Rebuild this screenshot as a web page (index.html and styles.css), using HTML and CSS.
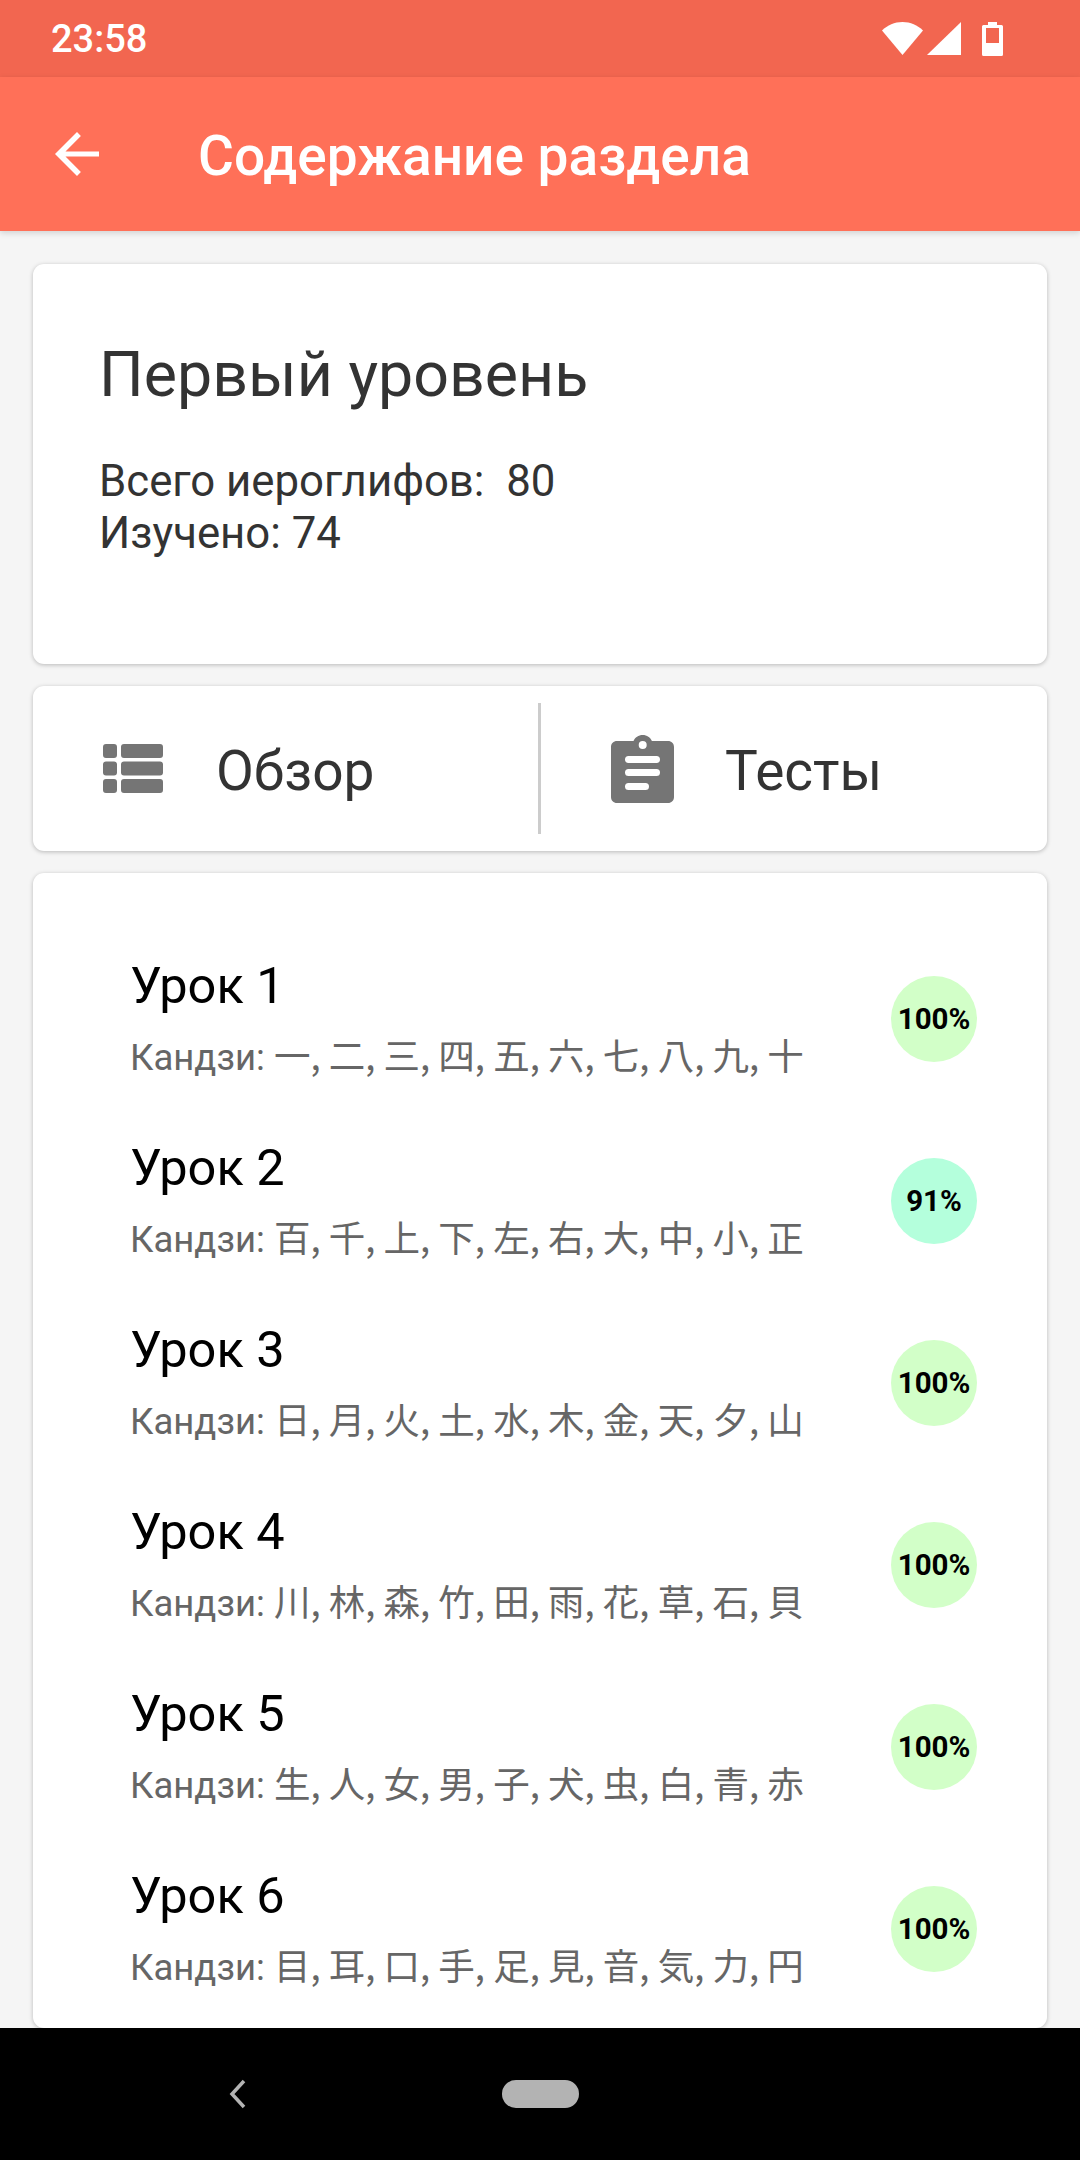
FILE: index.html
```html
<!DOCTYPE html>
<html lang="ru">
<head>
<meta charset="UTF-8">
<meta name="viewport" content="width=device-width, initial-scale=1.0">
<title>Содержание раздела</title>
<link rel="stylesheet" href="styles.css">
</head>
<body>
<div class="screen">
  <div class="status-bar">
    <span class="clock">23:58</span>
    <div class="status-icons">
      <svg class="wifi" width="41" height="33" viewBox="0 0 41 33"><path class="white" d="M0 8.500C5.500 3.200 12.500 0 20.500 0S35.500 3.200 41 8.500L20.500 33z"/></svg>
      <svg class="signal" width="34" height="33" viewBox="0 0 34 33"><path class="white" d="M34 0v33H0z"/></svg>
      <svg width="21" height="34" viewBox="0 0 21 34"><path class="white" fill-rule="evenodd" d="M6 0h9v3h4.500A1.500 1.500 0 0 1 21 4.500v28a1.500 1.500 0 0 1-1.500 1.500h-18A1.500 1.500 0 0 1 0 32.500v-28A1.500 1.500 0 0 1 1.500 3H6zM4 6v15h13V6z"/></svg>
    </div>
  </div>

  <div class="toolbar">
    <svg class="back" width="44" height="44" viewBox="0 0 44 44"><path class="white" d="M44 19.500H10.500L25.900 4 22 0 0 22l22 22 3.900-4L10.500 24.500H44z"/></svg>
    <h1>Содержание раздела</h1>
  </div>

  <div class="content">
    <div class="card summary">
      <h2>Первый уровень</h2>
      <p>Всего иероглифов:&nbsp; 80</p>
      <p>Изучено: 74</p>
    </div>

    <div class="card tabs">
      <div class="tab tab-left">
        <svg width="60" height="49" viewBox="0 0 60 49"><path class="grey" d="M3 0h8a3 3 0 0 1 3 3v8a3 3 0 0 1-3 3H3a3 3 0 0 1-3-3V3a3 3 0 0 1 3-3zM3 17.500h8a3 3 0 0 1 3 3v8a3 3 0 0 1-3 3H3a3 3 0 0 1-3-3v-8a3 3 0 0 1 3-3zM3 35h8a3 3 0 0 1 3 3v8a3 3 0 0 1-3 3H3a3 3 0 0 1-3-3v-8a3 3 0 0 1 3-3zM21 0h36a3 3 0 0 1 3 3v8a3 3 0 0 1-3 3H21a3 3 0 0 1-3-3V3a3 3 0 0 1 3-3zM21 17.500h36a3 3 0 0 1 3 3v8a3 3 0 0 1-3 3H21a3 3 0 0 1-3-3v-8a3 3 0 0 1 3-3zM21 35h36a3 3 0 0 1 3 3v8a3 3 0 0 1-3 3H21a3 3 0 0 1-3-3v-8a3 3 0 0 1 3-3z"/></svg>
        <span>Обзор</span>
      </div>
      <div class="tab-divider"></div>
      <div class="tab tab-right">
        <svg width="63" height="68" viewBox="0 0 63 68"><path class="grey" fill-rule="evenodd" d="M6 6h16.500C24 2.500 27.500 0 31.700 0s7.700 2.500 9.200 6H57c3.500 0 6 2.500 6 6v50c0 3.500-2.500 6-6 6H6c-3.500 0-6-2.500-6-6V12c0-3.500 2.500-6 6-6zM31.700 6a4 4 0 1 0 0 8 4 4 0 0 0 0-8zM17.500 21a3.500 3.500 0 0 0 0 7h28a3.500 3.500 0 0 0 0-7zM17.500 34a3.500 3.500 0 0 0 0 7h28a3.500 3.500 0 0 0 0-7zM17.500 48a3.500 3.500 0 0 0 0 7h17a3.500 3.500 0 0 0 0-7z"/></svg>
        <span>Тесты</span>
      </div>
    </div>

    <div class="card lessons">
      <div class="lesson">
        <div class="lesson-text">
          <div class="lesson-title">Урок 1</div>
          <div class="lesson-kanji">Кандзи: <span class="kanji">一, 二, 三, 四, 五, 六, 七, 八, 九, 十</span></div>
        </div>
        <div class="badge done">100%</div>
      </div>
      <div class="lesson">
        <div class="lesson-text">
          <div class="lesson-title">Урок 2</div>
          <div class="lesson-kanji">Кандзи: <span class="kanji">百, 千, 上, 下, 左, 右, 大, 中, 小, 正</span></div>
        </div>
        <div class="badge partial">91%</div>
      </div>
      <div class="lesson">
        <div class="lesson-text">
          <div class="lesson-title">Урок 3</div>
          <div class="lesson-kanji">Кандзи: <span class="kanji">日, 月, 火, 土, 水, 木, 金, 天, 夕, 山</span></div>
        </div>
        <div class="badge done">100%</div>
      </div>
      <div class="lesson">
        <div class="lesson-text">
          <div class="lesson-title">Урок 4</div>
          <div class="lesson-kanji">Кандзи: <span class="kanji">川, 林, 森, 竹, 田, 雨, 花, 草, 石, 貝</span></div>
        </div>
        <div class="badge done">100%</div>
      </div>
      <div class="lesson">
        <div class="lesson-text">
          <div class="lesson-title">Урок 5</div>
          <div class="lesson-kanji">Кандзи: <span class="kanji">生, 人, 女, 男, 子, 犬, 虫, 白, 青, 赤</span></div>
        </div>
        <div class="badge done">100%</div>
      </div>
      <div class="lesson">
        <div class="lesson-text">
          <div class="lesson-title">Урок 6</div>
          <div class="lesson-kanji">Кандзи: <span class="kanji">目, 耳, 口, 手, 足, 見, 音, 気, 力, 円</span></div>
        </div>
        <div class="badge done">100%</div>
      </div>
    </div>
  </div>

  <div class="nav-bar">
    <svg class="nav-back" width="24" height="30" viewBox="0 0 24 30"><path d="M17 2 5 15l12 13" fill="none" stroke="#b3b3b3" stroke-width="3.500"/></svg>
    <div class="nav-home"></div>
  </div>
</div>
</body>
</html>
```

FILE: styles.css
```css
body {
  font-family: Roboto, "Noto Sans CJK JP", sans-serif;
  margin: 0;
  padding: 0;
}

.screen {
  width: 1080px;
  height: 2160px;
  display: flex;
  flex-direction: column;
  overflow: hidden;
  background-color: #f5f5f5;
}

.white {
  fill: #fff;
}

.grey {
  fill: #757575;
}

.status-bar {
  height: 77px;
  flex: none;
  display: flex;
  align-items: center;
  justify-content: space-between;
  padding: 0 77px 0 51px;
  background-color: #f26650;
  color: #fff;
}

.clock {
  font-size: 38px;
  font-weight: 500;
}

.status-icons {
  display: flex;
  align-items: center;
}

.signal {
  margin: 0 21px 0 4px;
}

.toolbar {
  height: 154px;
  flex: none;
  display: flex;
  align-items: center;
  background-color: #ff7058;
  box-shadow: 0 2px 6px rgba(0, 0, 0, 0.15);
  position: relative;
  color: #fff;
}

.back {
  margin-left: 55px;
}

.toolbar h1 {
  margin: 3px 0 0 99px;
  font-size: 55px;
  font-weight: 500;
}

.content {
  flex: 1;
  min-height: 0;
  padding: 33px 33px 0;
  display: flex;
  flex-direction: column;
  gap: 22px;
}

.card {
  background-color: #fff;
  border-radius: 11px;
  box-shadow: 0 1px 4px rgba(0, 0, 0, 0.25);
}

.summary {
  height: 400px;
  flex: none;
  box-sizing: border-box;
  padding: 73px 66px 0;
  color: #333;
}

.summary h2 {
  margin: 0 0 42px;
  font-size: 62.700px;
  font-weight: 400;
  line-height: 76px;
}

.summary p {
  margin: 0;
  font-size: 43.750px;
  line-height: 52px;
}

.tabs {
  height: 165px;
  flex: none;
  display: flex;
  align-items: center;
  color: #333;
  font-size: 55px;
}

.tab {
  display: flex;
  align-items: center;
}

.tab span {
  margin-top: 4px;
}

.tab-left {
  width: 505px;
  box-sizing: border-box;
  padding-left: 70px;
  gap: 53px;
}

.tab-right {
  flex: 1;
  padding-left: 70px;
  gap: 51px;
}

.tab-divider {
  width: 3px;
  height: 131px;
  background-color: #ccc;
}

.lessons {
  flex: 1;
  padding: 55px 70px 0 97px;
}

.lesson {
  height: 182px;
  display: flex;
  align-items: center;
  justify-content: space-between;
}

.lesson-title {
  font-size: 50.500px;
  line-height: 62px;
  color: #000;
}

.lesson-kanji {
  margin-top: 13px;
  font-size: 36.500px;
  line-height: 50px;
  color: #666;
}

.kanji {
  font-family: "Noto Sans CJK JP", sans-serif;
}

.badge {
  width: 86px;
  height: 86px;
  border-radius: 50%;
  display: flex;
  align-items: center;
  justify-content: center;
  font-size: 29.500px;
  font-weight: 700;
  color: #000;
}

.done {
  background-color: #d2ffc8;
}

.partial {
  background-color: #b4ffdc;
}

.nav-bar {
  height: 132px;
  flex: none;
  position: relative;
  display: flex;
  align-items: center;
  justify-content: center;
  background-color: #000;
}

.nav-back {
  position: absolute;
  left: 227px;
  top: 51px;
}

.nav-home {
  width: 77px;
  height: 28px;
  border-radius: 14px;
  background-color: #b3b3b3;
}
```
